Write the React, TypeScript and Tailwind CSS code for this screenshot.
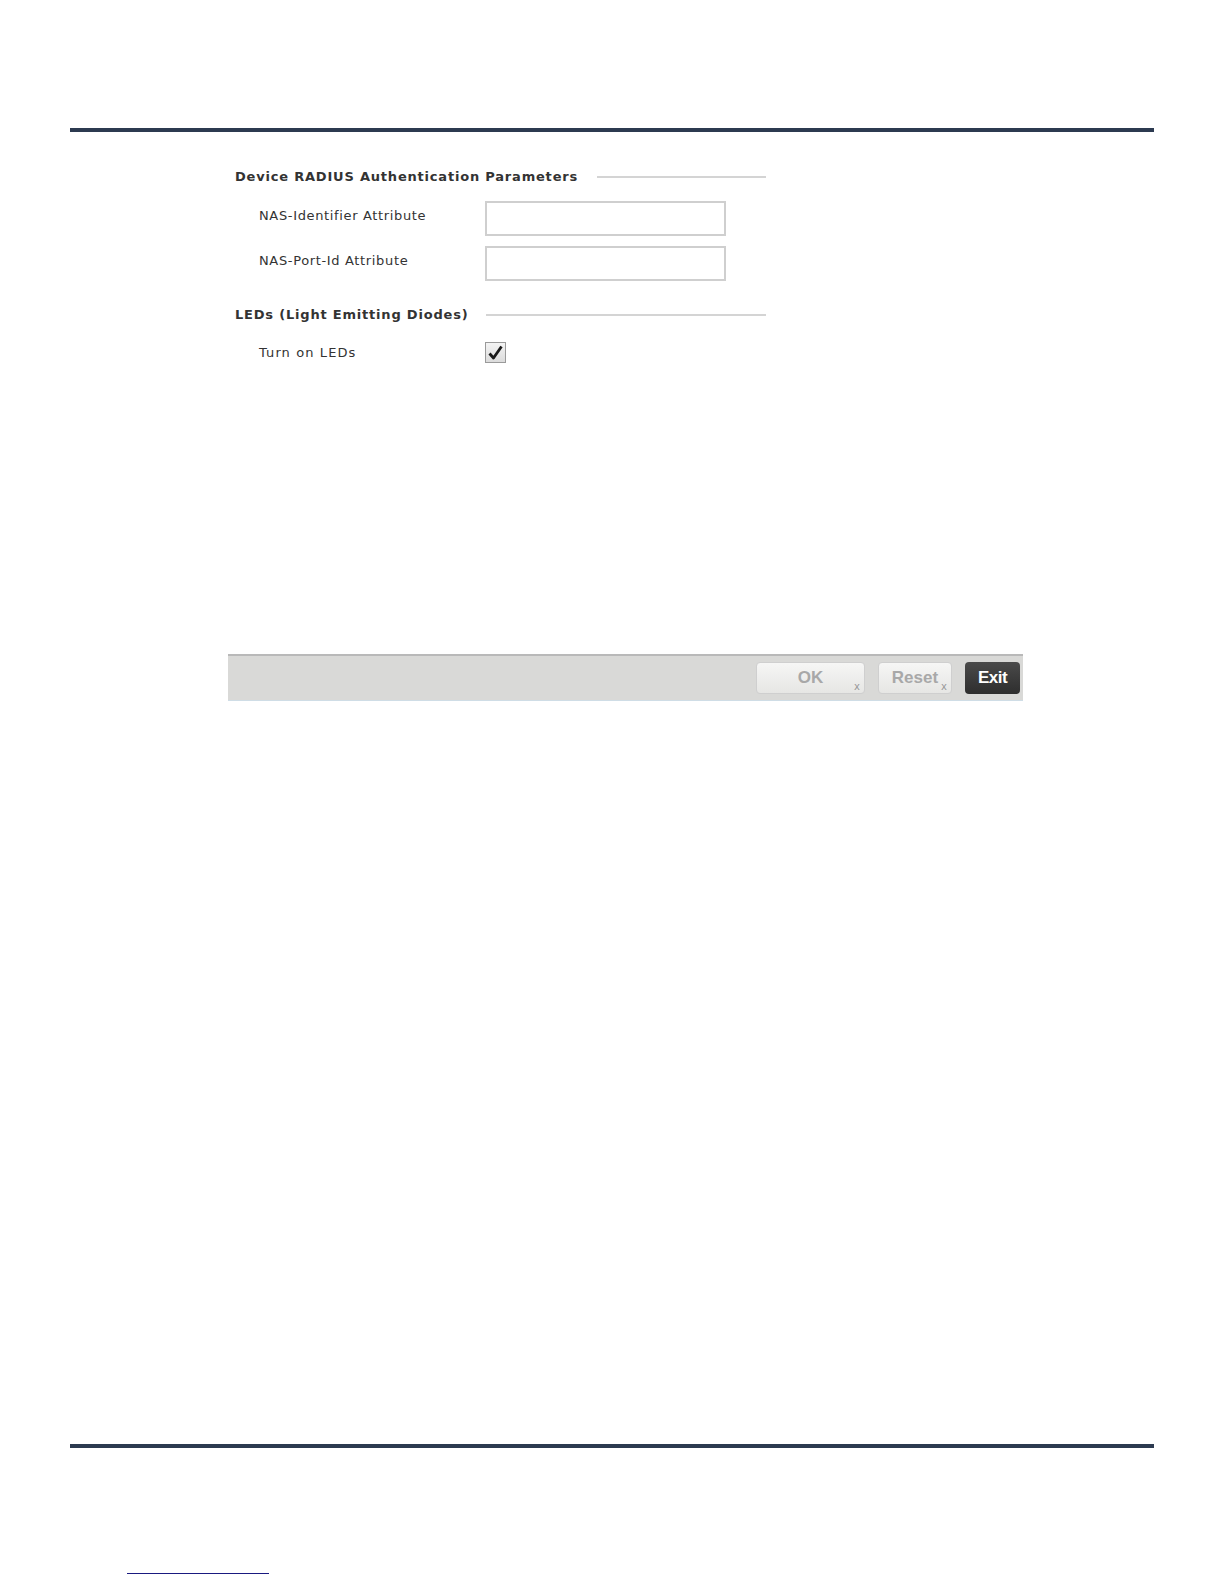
import React from 'react';

const uiFont = { fontFamily: '"DejaVu Sans", Verdana, sans-serif' };
const btnFont = { fontFamily: '"Liberation Sans Narrow", "Liberation Sans", Arial, sans-serif' };

function SectionHeading({ title, lineWidth }: { title: string; lineWidth: string }) {
  return (
    <div className="flex items-center h-[20px]">
      <span className="text-[13px] font-bold text-[#333] tracking-[0.8px]" style={uiFont}>
        {title}
      </span>
      <div className={`ml-auto h-[2px] bg-[#d4d4d4] ${lineWidth}`} />
    </div>
  );
}

function FieldRow({ label, children }: { label: string; children: React.ReactNode }) {
  return (
    <div className="flex items-start">
      <span className="w-[250px] pl-[24px] pt-[5px] text-[13px] leading-[20px] text-[#333] tracking-[0.65px]" style={uiFont}>
        {label}
      </span>
      {children}
    </div>
  );
}

function TextBox() {
  return <div className="w-[241px] h-[35px] border-2 border-[#cfcfcf] bg-white" />;
}

function CheckBox() {
  return (
    <div className="w-[21px] h-[21px] border border-[#9a9a9a] bg-gradient-to-b from-[#f4f4f4] to-[#dcdcdc] flex items-center justify-center">
      <svg width="17" height="17" viewBox="0 0 17 17">
        <path d="M2.5 9.5 L6.5 14 L14.5 2.5" fill="none" stroke="#1a1a1a" strokeWidth="2.8" strokeLinejoin="round" />
      </svg>
    </div>
  );
}

function DisabledButton({ label, width }: { label: string; width: string }) {
  return (
    <div
      className={`relative h-[32px] ${width} rounded-[4px] border border-[#cfcfcf] bg-gradient-to-b from-[#f6f6f5] to-[#e6e6e4] flex items-center justify-center`}
    >
      <span className="text-[17px] font-bold text-[#a8a8a8]" style={btnFont}>
        {label}
      </span>
      <span className="absolute right-[4px] bottom-[1px] text-[10px] leading-none text-[#999]" style={uiFont}>
        x
      </span>
    </div>
  );
}

export default function App() {
  return (
    <div className="w-[1224px] h-[1584px] bg-white flex flex-col">
      {/* header rule */}
      <div className="h-[128px]" />
      <div className="mx-[70px] h-[4px] bg-[#2c3a50]" />

      {/* form */}
      <div className="ml-[235px] w-[531px] mt-[35px] flex flex-col">
        <SectionHeading title="Device RADIUS Authentication Parameters" lineWidth="w-[169px]" />
        <div className="mt-[14px] flex flex-col gap-[10px]">
          <FieldRow label="NAS-Identifier Attribute">
            <TextBox />
          </FieldRow>
          <FieldRow label="NAS-Port-Id Attribute">
            <TextBox />
          </FieldRow>
        </div>
        <div className="mt-[24px]">
          <SectionHeading title="LEDs (Light Emitting Diodes)" lineWidth="w-[280px]" />
        </div>
        <div className="mt-[17px] flex items-center">
          <span className="w-[250px] pl-[24px] text-[13px] leading-[20px] text-[#333] tracking-[1.1px]" style={uiFont}>
            Turn on LEDs
          </span>
          <CheckBox />
        </div>
      </div>

      {/* button bar */}
      <div className="ml-[228px] w-[795px] mt-[291px] h-[47px] border-t-2 border-[#b9b9b9] border-b border-b-[#cfdde6] bg-[#d9d9d7] flex items-center justify-end gap-[13px] pr-[3px]">
        <DisabledButton label="OK" width="w-[109px]" />
        <DisabledButton label="Reset" width="w-[74px]" />
        <div className="h-[32px] w-[55px] rounded-[4px] bg-gradient-to-b from-[#4a4a4a] to-[#2e2e2e] flex items-center justify-center">
          <span className="text-[17px] font-bold text-white tracking-[-0.5px]" style={btnFont}>
            Exit
          </span>
        </div>
      </div>

      {/* footer rule */}
      <div className="mt-[743px] mx-[70px] h-[4px] bg-[#2c3a50]" />
      <div className="mt-[125px] ml-[127px] w-[142px] h-[1px] bg-[#1a1a80]" />
    </div>
  );
}
